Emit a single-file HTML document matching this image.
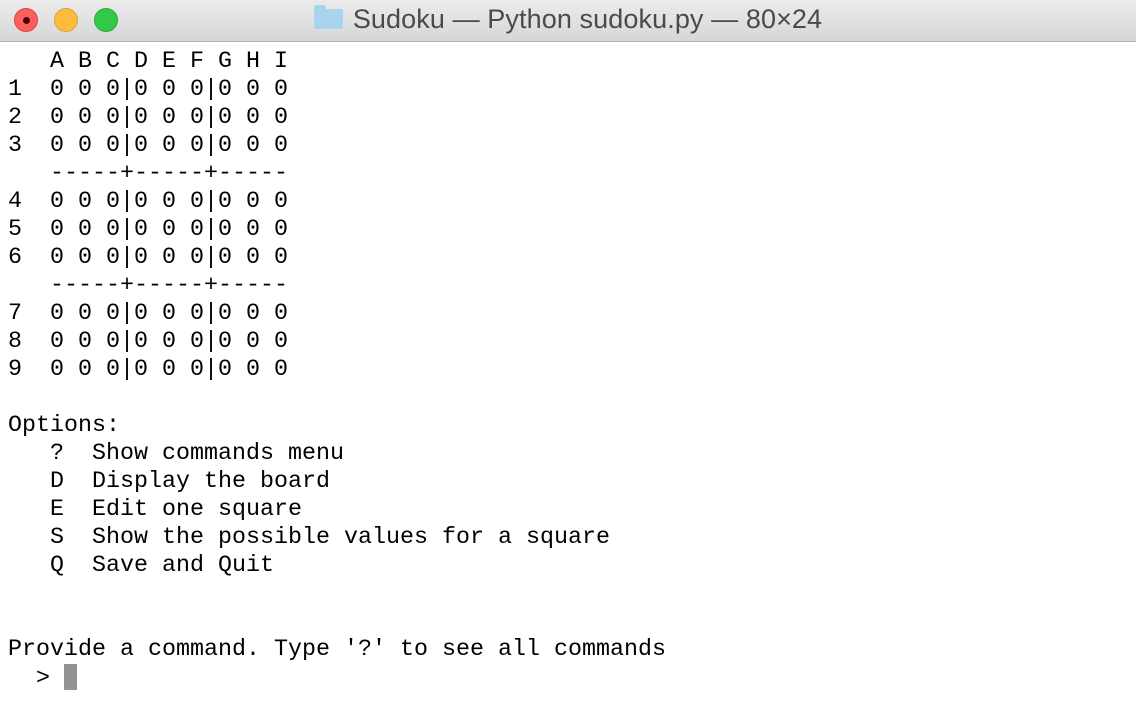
<!DOCTYPE html><html><head><style>
body{margin:0;width:1136px;height:728px;overflow:hidden;background:#fff;font-family:"Liberation Sans",sans-serif}
.tb{position:absolute;left:0;top:0;width:1136px;height:41px;background:linear-gradient(#ececec,#d6d6d6);border-bottom:1px solid #b4b4b4}
.c{position:absolute;top:8px;width:24px;height:24px;border-radius:50%;box-sizing:border-box}
.t{position:absolute;left:0;width:1136px;top:4px;text-align:center;font-size:27px;color:#4a4a4a;letter-spacing:0.1px}
.f{display:inline-block;width:29px;height:20px;background:#a9d4ee;border-radius:2px;vertical-align:-1px;margin-right:10px;position:relative}
.f:before{content:"";position:absolute;left:0;top:-4px;width:12px;height:6px;background:#a9d4ee;border-radius:2px 2px 0 0}
pre{position:absolute;left:8px;top:48px;margin:0;font-family:"Liberation Mono",monospace;font-size:23.33px;line-height:28px;color:#000}
.cur{display:inline-block;width:13px;height:26px;background:#939393;vertical-align:-6px}
</style></head><body>
<div class="tb">
<div class="c" style="left:14px;background:#fc605c;border:1px solid #e0443e"><div style="position:absolute;left:8px;top:8px;width:7px;height:7px;border-radius:50%;background:#4d0000"></div></div>
<div class="c" style="left:54px;background:#fdbc40;border:1px solid #dea236"></div>
<div class="c" style="left:94px;background:#34c84a;border:1px solid #27aa35"></div>
<div class="t"><span class="f"></span>Sudoku — Python sudoku.py — 80×24</div>
</div>
<pre>   A B C D E F G H I
1  0 0 0|0 0 0|0 0 0
2  0 0 0|0 0 0|0 0 0
3  0 0 0|0 0 0|0 0 0
   -----+-----+-----
4  0 0 0|0 0 0|0 0 0
5  0 0 0|0 0 0|0 0 0
6  0 0 0|0 0 0|0 0 0
   -----+-----+-----
7  0 0 0|0 0 0|0 0 0
8  0 0 0|0 0 0|0 0 0
9  0 0 0|0 0 0|0 0 0

Options:
   ?  Show commands menu
   D  Display the board
   E  Edit one square
   S  Show the possible values for a square
   Q  Save and Quit


Provide a command. Type '?' to see all commands
  &gt; <span class="cur"></span></pre>
</body></html>
